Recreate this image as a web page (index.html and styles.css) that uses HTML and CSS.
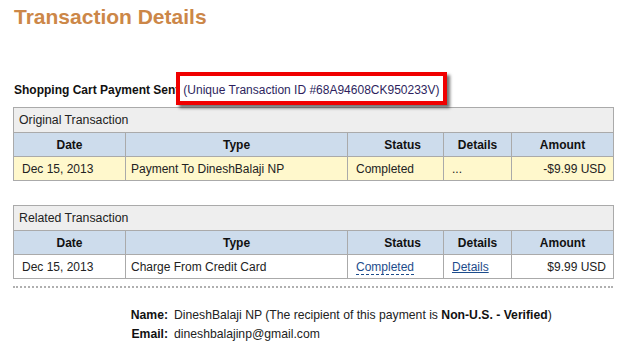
FILE: index.html
```html
<!DOCTYPE html>
<html lang="en">
<head>
    <meta charset="UTF-8">
    <title>Transaction Details</title>
    <link rel="stylesheet" href="styles.css">
</head>
<body>
    <h1>Transaction Details</h1>

    <p class="summary">
        <b>Shopping Cart Payment Sent</b><span class="txn-id">(Unique Transaction ID #68A94608CK950233V)</span>
    </p>

    <table class="txn">
        <colgroup>
            <col class="c-date"><col class="c-type"><col class="c-status"><col class="c-details"><col class="c-amount">
        </colgroup>
        <caption>Original Transaction</caption>
        <tr>
            <th>Date</th><th>Type</th><th>Status</th><th>Details</th><th>Amount</th>
        </tr>
        <tr class="pending">
            <td class="date">Dec 15, 2013</td>
            <td>Payment To DineshBalaji NP</td>
            <td class="status">Completed</td>
            <td class="details">...</td>
            <td class="amount">-$9.99 USD</td>
        </tr>
    </table>

    <table class="txn">
        <colgroup>
            <col class="c-date"><col class="c-type"><col class="c-status"><col class="c-details"><col class="c-amount">
        </colgroup>
        <caption>Related Transaction</caption>
        <tr>
            <th>Date</th><th>Type</th><th>Status</th><th>Details</th><th>Amount</th>
        </tr>
        <tr>
            <td class="date">Dec 15, 2013</td>
            <td>Charge From Credit Card</td>
            <td class="status"><a href="#" class="help">Completed</a></td>
            <td class="details"><a href="#">Details</a></td>
            <td class="amount">$9.99 USD</td>
        </tr>
    </table>

    <hr class="dots">

    <dl class="party">
        <dt>Name:</dt>
        <dd>DineshBalaji NP (The recipient of this payment is <b>Non-U.S. - Verified</b>)</dd>
        <dt>Email:</dt>
        <dd>dineshbalajinp@gmail.com</dd>
    </dl>
</body>
</html>
```

FILE: styles.css
```css
body {
    margin: 0;
    padding: 0 13px;
    font-family: "Liberation Sans", Arial, sans-serif;
    font-size: 12px;
    color: #222;
    background: #fff;
}
h1 {
    margin: 5px 0 0 1px;
    font-size: 21px;
    color: #cc8748;
}
.summary {
    margin: 43px 0 0 1px;
    height: 32px;
}
.summary b {
    color: #111;
}
.txn-id {
    display: inline-block;
    margin-left: -3px;
    padding: 7px 3px 4px 3px;
    border: 4px solid #f00000;
    box-shadow: 3px 3px 3px rgba(0, 0, 0, 0.55);
    color: #2e1f5e;
}
.txn {
    width: 600px;
    border-collapse: collapse;
    table-layout: fixed;
    margin-top: 3px;
}
.txn + .txn {
    margin-top: 24px;
}
.c-date { width: 112px; }
.c-type { width: 222px; }
.c-status { width: 96px; }
.c-details { width: 68px; }
.c-amount { width: 102px; }
.txn caption {
    text-align: left;
    height: 24px;
    line-height: 24px;
    padding: 0 5px;
    background: #eeeeee;
    border: 1px solid #aaaaaa;
    border-bottom: 0;
    font-size: 12.3px;
}
.txn th, .txn td {
    border: 1px solid #aaaaaa;
    height: 23px;
    padding: 0 5px;
}
.txn th {
    background: #cddcec;
    color: #111;
    text-align: center;
}
.txn th:nth-child(3) {
    text-align: right;
    padding-right: 22px;
}
.txn td.date { padding-left: 8px; }
.txn td.status, .txn td.details { padding-left: 8px; }
.txn td.amount {
    text-align: right;
    padding-right: 7px;
}
.pending td {
    background: #fff8cc;
}
.txn a {
    color: #1c4c8c;
}
.txn a.help {
    text-decoration: none;
    border-bottom: 1px dashed #1c4c8c;
}
.dots {
    width: 600px;
    margin: 7px 0 0;
    border: 0;
    border-top: 2px dotted #b0b0b0;
    height: 0;
}
.party {
    display: grid;
    grid-template-columns: 155px auto;
    column-gap: 6px;
    row-gap: 5px;
    margin: 20px 0 0;
    font-size: 12.2px;
}
.party dt {
    text-align: right;
    font-weight: bold;
    color: #111;
}
.party dd {
    margin: 0;
}
.party dd b {
    color: #111;
}
```
